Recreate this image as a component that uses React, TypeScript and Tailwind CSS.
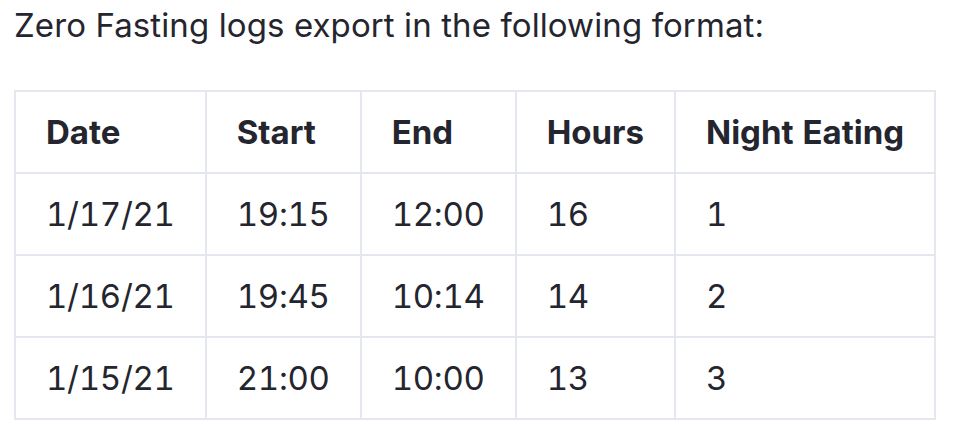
const rows = [
  ["1/17/21", "19:15", "12:00", "16", "1"],
  ["1/16/21", "19:45", "10:14", "14", "2"],
  ["1/15/21", "21:00", "10:00", "13", "3"],
];

const headers = ["Date", "Start", "End", "Hours", "Night Eating"];

export default function App() {
  return (
    <div
      className="min-h-[430px] bg-white px-[14px] pt-[3px] text-[#24252e]"
      style={{ fontFamily: "Inter, 'Liberation Sans', sans-serif" }}
    >
      <p className="text-[33px] leading-[44px] tracking-[0.1px]">Zero Fasting logs export in the following format:</p>
      <table className="mt-[43px] border-collapse border-2 border-[#e4e8ee] text-[33px] tabular-nums whitespace-nowrap">
        <thead>
          <tr>
            {headers.map((h) => (
              <th
                key={h}
                className="border-2 border-[#e4e8ee] px-[30px] py-[18px] text-left font-bold leading-[44px] tracking-[0px]"
              >
                {h}
              </th>
            ))}
          </tr>
        </thead>
        <tbody>
          {rows.map((r, i) => (
            <tr key={i}>
              {r.map((c, j) => (
                <td key={j} className="border-2 border-[#e4e8ee] px-[30px] py-[18px] leading-[44px] tracking-[-0.3px]">
                  {c}
                </td>
              ))}
            </tr>
          ))}
        </tbody>
      </table>
    </div>
  );
}
